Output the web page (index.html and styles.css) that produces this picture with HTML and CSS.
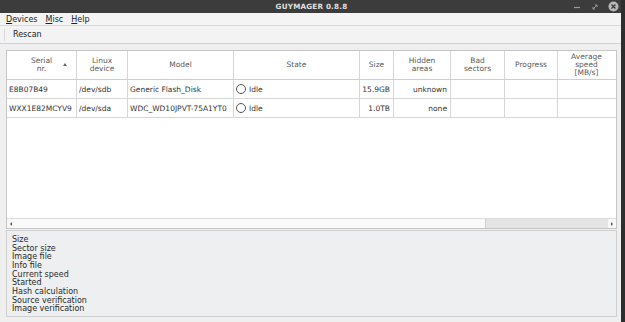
FILE: index.html
```html
<!DOCTYPE html>
<html>
<head>
<meta charset="utf-8">
<link rel="stylesheet" href="styles.css">
</head>
<body>
<div class="window">
  <div class="titlebar">
    <span class="title">GUYMAGER 0.8.8</span>
    <div class="wbtns">
      <svg class="wb" width="10" height="10" viewBox="0 0 10 10"><path d="M2 5.5h6" stroke="#9a9a9a" stroke-width="1.2"/></svg>
      <svg class="wb" width="10" height="10" viewBox="0 0 10 10"><path d="M3 7l4-4M5 3h2v2M3 5v2h2" stroke="#9a9a9a" stroke-width="1" fill="none"/></svg>
      <svg class="wb" width="11" height="11" viewBox="0 0 11 11"><circle cx="5.5" cy="5.5" r="5" fill="#b8b8b8"/><path d="M3.5 3.5l4 4M7.5 3.5l-4 4" stroke="#3b3b3b" stroke-width="1.3"/></svg>
    </div>
  </div>
  <div class="menubar">
    <span class="mi"><u>D</u>evices</span>
    <span class="mi"><u>M</u>isc</span>
    <span class="mi"><u>H</u>elp</span>
  </div>
  <div class="toolbar">
    <span class="grip"></span>
    <span class="tb">Rescan</span>
  </div>
  <div class="main">
    <div class="table">
      <div class="grid head">
        <div class="h sort">Serial<br>nr.<span class="arrow"></span></div>
        <div class="h">Linux<br>device</div>
        <div class="h">Model</div>
        <div class="h">State</div>
        <div class="h">Size</div>
        <div class="h">Hidden<br>areas</div>
        <div class="h">Bad<br>sectors</div>
        <div class="h">Progress</div>
        <div class="h">Average<br>speed<br>[MB/s]</div>
      </div>
      <div class="grid row">
        <div class="c">E8B07B49</div>
        <div class="c">/dev/sdb</div>
        <div class="c">Generic Flash_Disk</div>
        <div class="c"><span class="radio"></span>Idle</div>
        <div class="c r">15.9GB</div>
        <div class="c r">unknown</div>
        <div class="c"></div>
        <div class="c"></div>
        <div class="c"></div>
      </div>
      <div class="grid row">
        <div class="c">WXX1E82MCYV9</div>
        <div class="c">/dev/sda</div>
        <div class="c">WDC_WD10JPVT-75A1YT0</div>
        <div class="c"><span class="radio"></span>Idle</div>
        <div class="c r">1.0TB</div>
        <div class="c r">none</div>
        <div class="c"></div>
        <div class="c"></div>
        <div class="c"></div>
      </div>
      <div class="empty"></div>
      <div class="hscroll">
        <span class="sarrow left"></span>
        <span class="thumb"></span>
        <span class="track"></span>
        <span class="sarrow right"></span>
      </div>
    </div>
    <div class="info">
      <div>Size</div>
      <div>Sector size</div>
      <div>Image file</div>
      <div>Info file</div>
      <div>Current speed</div>
      <div>Started</div>
      <div>Hash calculation</div>
      <div>Source verification</div>
      <div>Image verification</div>
    </div>
  </div>
</div>
</body>
</html>
```

FILE: styles.css
```css
html, body {
  margin: 0;
  padding: 0;
}
body {
  width: 625px;
  height: 322px;
  background: #2e2e2e;
  overflow: hidden;
  font-family: "DejaVu Sans", sans-serif;
  font-size: 8px;
  color: #2d2d2d;
}
.window {
  width: 621px;
  height: 322px;
  background: #efefef;
  display: flex;
  flex-direction: column;
}
.titlebar {
  height: 13px;
  flex: none;
  background: #3c3c3c;
  position: relative;
  display: flex;
  align-items: center;
  justify-content: center;
}
.title {
  color: #e0e0e0;
  font-weight: bold;
  font-size: 7.2px;
  letter-spacing: 0.2px;
  margin-left: 2px;
}
.wbtns {
  position: absolute;
  right: 2px;
  top: 1px;
  display: flex;
  gap: 8px;
  align-items: center;
}
.menubar {
  height: 12px;
  flex: none;
  background: #f4f4f4;
  border-bottom: 1px solid #d8d8d8;
  display: flex;
  align-items: center;
  padding-left: 6px;
  gap: 8px;
  font-size: 8px;
  color: #222;
}
.toolbar {
  height: 17px;
  flex: none;
  background: #f3f3f3;
  border-bottom: 1px solid #d2d2d2;
  display: flex;
  align-items: center;
  padding-left: 4px;
}
.grip {
  width: 1px;
  height: 12px;
  background: #d8d8d8;
  margin-right: 8px;
}
.tb {
  color: #222;
}
.main {
  flex: 1;
  display: flex;
  flex-direction: column;
  padding: 6px 4px 5px 6px;
}
.table {
  height: 177px;
  flex: none;
  border: 1px solid #c6c6c6;
  background: #fff;
  display: flex;
  flex-direction: column;
}
.grid {
  display: grid;
  grid-template-columns: 70px 51px 106px 126px 34px 57px 54px 53px 57px;
}
.head {
  height: 28px;
  border-bottom: 1px solid #cfcfcf;
}
.h {
  position: relative;
  border-right: 1px solid #d6d6d6;
  display: flex;
  align-items: center;
  justify-content: center;
  text-align: center;
  color: #5a5a5a;
  line-height: 8px;
  font-size: 7.5px;
}
.h:last-child {
  border-right: none;
}
.arrow {
  position: absolute;
  right: 9px;
  top: 12px;
  width: 0;
  height: 0;
  border-left: 2px solid transparent;
  border-right: 2px solid transparent;
  border-bottom: 3px solid #666;
}
.row {
  height: 18px;
  border-bottom: 1px solid #d6d6d6;
}
.c {
  border-right: 1px solid #d6d6d6;
  display: flex;
  align-items: center;
  padding-left: 2px;
  white-space: nowrap;
  overflow: hidden;
  font-size: 7.5px;
  color: #333;
}
.c:last-child {
  border-right: none;
}
.c.r {
  justify-content: flex-end;
  padding-left: 0;
  padding-right: 3px;
}
.radio {
  width: 10px;
  height: 10px;
  border: 1px solid #555;
  border-radius: 50%;
  margin-right: 3px;
  box-sizing: border-box;
  background: #fff;
}
.empty {
  flex: 1;
}
.hscroll {
  height: 9px;
  flex: none;
  border-top: 1px solid #dcdcdc;
  display: flex;
  align-items: center;
  background: #f7f7f7;
}
.sarrow {
  width: 8px;
  height: 9px;
  position: relative;
}
.sarrow.left::after, .sarrow.right::after {
  content: "";
  position: absolute;
  top: 3px;
  width: 0;
  height: 0;
  border-top: 2px solid transparent;
  border-bottom: 2px solid transparent;
}
.sarrow.left::after {
  left: 3px;
  border-right: 2px solid #555;
}
.sarrow.right::after {
  left: 3px;
  border-left: 2px solid #555;
}
.thumb {
  width: 470px;
  height: 9px;
  background: #fafafa;
  border-right: 1px solid #d0d0d0;
}
.track {
  flex: 1;
  height: 9px;
  background: #e4e4e4;
}
.info {
  flex: 1;
  margin-top: 1px;
  border: 1px solid #cfcfcf;
  background: #eeeff0;
  padding: 5px 0 0 5px;
  font-size: 8px;
  line-height: 8.65px;
  color: #2a2a2a;
}
```
